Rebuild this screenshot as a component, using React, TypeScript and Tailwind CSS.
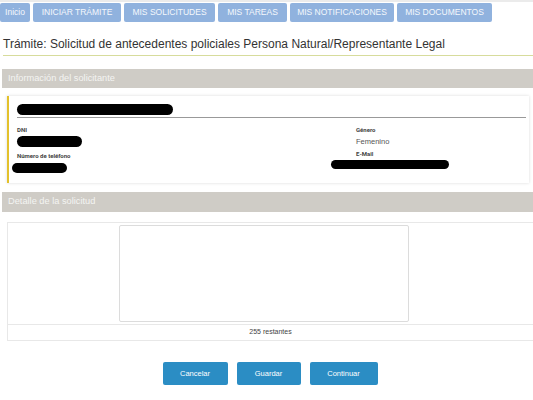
import React from "react";

const tabs = [
  { label: "Inicio", w: "w-[30px]" },
  { label: "INICIAR TRÁMITE", w: "w-[88px]" },
  { label: "MIS SOLICITUDES", w: "w-[91px]" },
  { label: "MIS TAREAS", w: "w-[69px]" },
  { label: "MIS NOTIFICACIONES", w: "w-[104px]" },
  { label: "MIS DOCUMENTOS", w: "w-[95px]" },
];

function Pill({ cls }: { cls: string }) {
  return <div className={`bg-black rounded-full ${cls}`} />;
}

export default function App() {
  return (
    <div className="w-[533px] h-[400px] overflow-hidden bg-white font-['Liberation_Sans',Arial,sans-serif] text-[#333]">
      <div className="h-[2px] bg-[#ebebeb]" />
      <nav className="flex gap-[3px] mt-px">
        {tabs.map((t) => (
          <div
            key={t.label}
            className={`${t.w} h-[19px] flex items-center justify-center bg-[#90b2de] text-[#f5f8fc] text-[8.5px] rounded-[2px] whitespace-nowrap`}
          >
            {t.label}
          </div>
        ))}
      </nav>

      <h1 className="mt-[15px] ml-[3px] text-[12px] leading-[15px] text-[#333] pb-[3px] border-b border-[#d7dc9c]">
        Trámite: Solicitud de antecedentes policiales Persona Natural/Representante Legal
      </h1>

      <div className="mt-[13px] ml-[2px] h-[19px] bg-[#cfccc6] flex items-center px-[6px] text-[9.25px] text-[#f4f4f2]">
        Información del solicitante
      </div>

      <div className="mt-[8px] ml-[7px] mr-[4px] h-[87px] bg-white border-l-2 border-[#e3c12b] shadow-[0_0_3px_rgba(0,0,0,0.15)] pl-[8px] pr-[3px] pt-[8px]">
        <div className="border-b border-[#999] pb-[2px]">
          <Pill cls="w-[156px] h-[11px]" />
        </div>
        <div className="grid grid-cols-[314px_1fr] mt-[8px]">
          <div className="flex flex-col">
            <span className="text-[6px] font-bold font-['Roboto',sans-serif] text-[#444] leading-[8px]">DNI</span>
            <Pill cls="w-[65px] h-[11px] mt-[2px]" />
            <span className="text-[6px] font-bold font-['Roboto',sans-serif] text-[#444] leading-[8px] mt-[5px]">Número de teléfono</span>
            <Pill cls="w-[55px] h-[10px] mt-[3px] -ml-[5px]" />
          </div>
          <div className="flex flex-col">
            <span className="ml-[25px] text-[6px] font-bold font-['Roboto',sans-serif] text-[#444] leading-[8px]">Género</span>
            <span className="ml-[25px] text-[7.5px] leading-[10px] text-[#555] mt-[3px]">Femenino</span>
            <span className="ml-[25px] text-[6px] font-bold font-['Roboto',sans-serif] text-[#444] leading-[8px] mt-[3px]">E-Mail</span>
            <Pill cls="w-[118px] h-[9px] mt-[2px]" />
          </div>
        </div>
      </div>

      <div className="mt-[9px] ml-[2px] h-[20px] bg-[#cfccc6] flex items-center px-[6px] text-[9.25px] text-[#f4f4f2]">
        Detalle de la solicitud
      </div>

      <div className="mt-[10px] ml-[7px] border border-[#e8e8e8] border-r-0">
        <div className="h-[101px] flex justify-center pt-[2px] pr-[4px]">
          <div className="ml-[-10px] w-[290px] h-[97px] border border-[#dcdcdc] rounded-[2px] bg-white" />
        </div>
        <div className="h-[16px] border-t border-[#e8e8e8] flex items-center justify-center text-[7px] text-[#444]">
          255 restantes
        </div>
      </div>

      <div className="mt-[21px] flex justify-center gap-[9px] pl-[7px]">
        <button className="w-[65px] h-[23px] bg-[#2b8dc4] rounded-[2px] text-white text-[7.5px]">Cancelar</button>
        <button className="w-[64px] h-[23px] bg-[#2b8dc4] rounded-[2px] text-white text-[7.5px]">Guardar</button>
        <button className="w-[68px] h-[23px] bg-[#2b8dc4] rounded-[2px] text-white text-[7.5px]">Continuar</button>
      </div>
    </div>
  );
}
